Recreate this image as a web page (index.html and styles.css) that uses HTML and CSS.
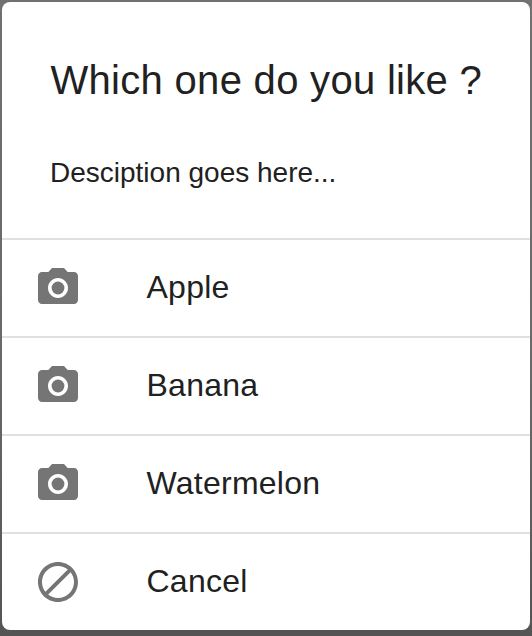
FILE: index.html
```html
<!DOCTYPE html>
<html lang="en">
<head>
<meta charset="utf-8">
<title>Which one do you like ?</title>
<link rel="stylesheet" href="styles.css">
</head>
<body>
<svg class="defs" aria-hidden="true">
<symbol id="camera" viewBox="0 0 24 24"><circle cx="12" cy="12" r="3.2"/><path d="M9 2L7.17 4H4c-1.1 0-2 .9-2 2v12c0 1.1.9 2 2 2h16c1.1 0 2-.9 2-2V6c0-1.1-.9-2-2-2h-3.17L15 2H9zm3 15c-2.76 0-5-2.24-5-5s2.24-5 5-5 5 2.24 5 5-2.24 5-5 5z"/></symbol>
<symbol id="cancel" viewBox="0 0 24 24"><path d="M12 2C6.48 2 2 6.48 2 12s4.48 10 10 10 10-4.48 10-10S17.52 2 12 2zM4 12c0-4.42 3.58-8 8-8 1.85 0 3.55.63 4.9 1.69L5.69 16.9C4.63 15.55 4 13.85 4 12zm8 8c-1.85 0-3.55-.63-4.9-1.69L18.31 7.1C19.37 8.45 20 10.15 20 12c0 4.42-3.58 8-8 8z"/></symbol>
</svg>
<main class="dialog">
<header class="header">
<h1 class="title">Which one do you like ?</h1>
<p class="description">Desciption goes here...</p>
</header>
<ul class="list">
<li class="item"><svg class="icon"><use href="#camera"/></svg><span class="label">Apple</span></li>
<li class="item"><svg class="icon"><use href="#camera"/></svg><span class="label">Banana</span></li>
<li class="item"><svg class="icon"><use href="#camera"/></svg><span class="label">Watermelon</span></li>
<li class="item"><svg class="icon"><use href="#cancel"/></svg><span class="label">Cancel</span></li>
</ul>
</main>
</body>
</html>
```
FILE: styles.css
```css
* { box-sizing: border-box; }
body { margin: 0; height: 636px; padding: 2px; overflow: hidden; background: linear-gradient(#707070, #686868 60%, #545454); font-family: "Liberation Sans", Arial, sans-serif; color: #212121; }
.defs { display: none; }
.dialog { height: 628px; overflow: hidden; border-radius: 8px; background: #fff; }
.header { height: 236px; padding: 54px 48px 0; }
.title { margin: 0; padding-left: 0.5px; font-size: 40px; line-height: 48px; font-weight: 400; white-space: nowrap; letter-spacing: 0.3px; }
.description { margin: 51px 0 0; font-size: 28px; line-height: 36px; white-space: nowrap; }
.list { margin: 0; padding: 0; list-style: none; }
.item { display: flex; align-items: center; height: 98px; padding-left: 32px; gap: 64.5px; border-top: 2px solid #e0e0e0; }
.icon { width: 48px; height: 48px; fill: #757575; }
.label { padding-bottom: 2px; font-size: 32px; line-height: 40px; letter-spacing: 0.25px; }
.label { display: block; }
```
